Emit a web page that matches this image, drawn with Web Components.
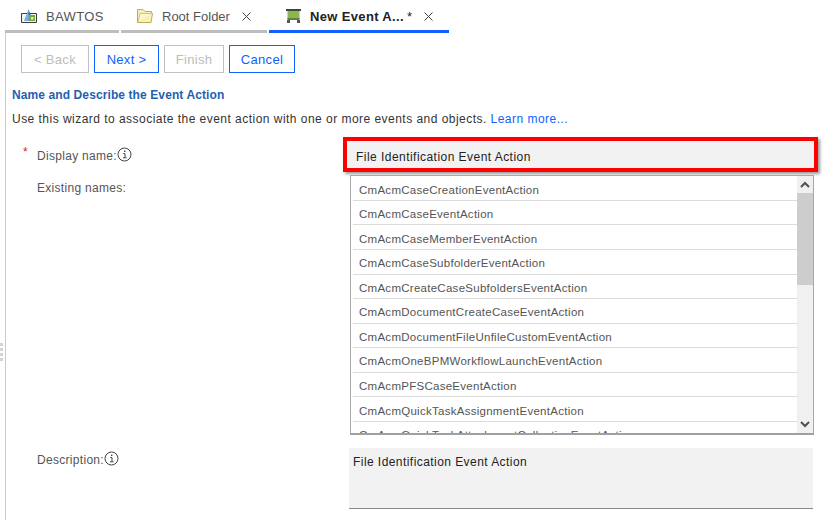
<!DOCTYPE html>
<html><head><meta charset="utf-8">
<style>
html,body{margin:0;padding:0;background:#fff}
body{width:830px;height:520px;overflow:hidden;font-family:"Liberation Sans",Arial,sans-serif;color:#333}
</style></head><body>
<wizard-app></wizard-app>
<template id="t-tab"><style>
:host{display:flex;align-items:center;box-sizing:border-box;height:33px;padding-top:2px;border-bottom:3px solid #bdbdbd;font-size:13px;letter-spacing:.35px;color:#555}
:host([active]){border-bottom-color:#0f62fe;color:#222;font-weight:bold}
.ic{display:flex;margin-right:9px}
.x{display:flex;margin-left:auto}
</style><span class="ic"><slot name="icon"></slot></span><slot></slot><span class="x"><slot name="close"></slot></span></template>
<template id="t-btn"><style>
:host{display:flex;align-items:center;justify-content:center;box-sizing:border-box;height:28px;border:1px solid #0f62fe;color:#0f62fe;font-size:13px;letter-spacing:.3px;background:#fff}
:host([disabled]){border-color:#c0c0c0;color:#bdbdbd}
</style><slot></slot></template>
<template id="t-info"><style>
:host{display:inline-flex;vertical-align:-2px}
</style><svg width="15" height="15" viewBox="0 0 15 15"><circle cx="7.5" cy="7.5" r="6.5" fill="none" stroke="#444" stroke-width="1"/><path d="M6.2 6.6H8V10.6M6 10.8H9.6" fill="none" stroke="#444" stroke-width="1"/><rect x="7" y="3.6" width="1.4" height="1.4" fill="#444"/></svg></template>
<template id="t-list"><style>
:host{display:flex;box-sizing:border-box;width:464px;height:260px;border:1px solid #a8a8a8;border-bottom:2px solid #a0a0a0;background:#fff;overflow:hidden}
.items{flex:1;padding:.4px 0 0 2px;min-width:0;overflow:hidden}
.bar{width:16px;flex:none;background:#f0f0f0;display:flex;flex-direction:column;align-items:center;justify-content:space-between}
.btn{height:17px;display:flex;align-items:center;justify-content:center}
.thumb{width:16px;height:92px;background:#cdcdcd}
.track{flex:1;width:100%}
</style><div class="items"><slot></slot></div><div class="bar"><div class="btn"><svg width="10" height="7" viewBox="0 0 10 7"><path d="M1 6L5 2L9 6" fill="none" stroke="#505050" stroke-width="2"/></svg></div><div class="thumb"></div><div class="track"></div><div class="btn"><svg width="10" height="7" viewBox="0 0 10 7"><path d="M1 1L5 5L9 1" fill="none" stroke="#505050" stroke-width="2"/></svg></div></div></template>
<template id="t-item"><style>
:host{display:flex;align-items:center;box-sizing:border-box;height:24.55px;padding:3px 0 0 6px;border-bottom:1px solid #dcdcdc;font-size:11.5px;letter-spacing:.27px;color:#555;white-space:nowrap}
</style><slot></slot></template>
<template id="t-app"><style>
:host{display:block;width:830px;height:520px;font-family:"Liberation Sans",Arial,sans-serif}
.tabs{display:grid;grid-template-columns:114px 146px 180px;column-gap:2px;padding-left:5px}
.panel{margin-left:5px;border-left:1px solid #ccc;height:487px;position:relative}
.btns{display:grid;grid-template-columns:68px 65px 60px 66px;column-gap:5px;padding:12px 0 0 15px}
h2{margin:15px 0 0 6px;font-size:12px;line-height:14px;color:#1f5fb0;letter-spacing:.1px}
p{margin:10px 0 0 6px;font-size:12px;line-height:14px;color:#333;letter-spacing:.47px}
a{color:#0f62fe}
.form{display:grid;grid-template-columns:337px 475px;margin-top:11px}
.lab{font-size:12px;letter-spacing:.3px;color:#555;padding-left:31px;position:relative;line-height:15px}
.req{position:absolute;left:17px;top:8px;color:#e02020;font-size:12px}
.name{box-sizing:border-box;height:35px;border:4px solid #f00;box-shadow:2px 2px 3px #999;background:#f2f2f2;padding:4px 0 0 9px;display:flex;align-items:center;font-size:12px;letter-spacing:.46px;color:#222}
.gap{height:3px;grid-column:1/3}
.l1{padding-top:6px}
.l0{padding-top:10px}
.listcell{padding-left:7px}
.desc{box-sizing:border-box;width:464px;height:61px;margin-left:6px;margin-top:13px;background:#f2f2f2;border-bottom:1px solid #888;padding:7px 4px;font-size:12px;letter-spacing:.44px;color:#222}
.grip{position:absolute;left:-6px;top:310px;display:grid;gap:2px}
.grip i{display:block;width:3px;height:3px;background:#d4d4d4}
</style>
<div class="tabs">
<app-tab style="padding-left:16px"><svg slot="icon" width="16" height="14" viewBox="0 0 16 14"><path d="M.5 4.5H15.5V13.5H.5Z" fill="#f4f4f0" stroke="#3c3c3c"/><path d="M7.5 0L3 12H7.5Z" fill="#74b0e0"/><path d="M7.5 0L12 12H7.5Z" fill="#2f72ad"/><rect x="8" y="6" width="6" height="6" fill="#75a83a"/><rect x="10" y="8" width="2.5" height="2.5" fill="#e4f0c4"/></svg>BAWTOS</app-tab>
<app-tab style="padding-left:16px;padding-right:15px;letter-spacing:0"><svg slot="icon" width="16" height="14" viewBox="0 0 16 14"><path d="M.5 13.5V.5H6L8 2.5H14.5V4.5H15.5L14 13.5Z" fill="#f8efb5" stroke="#c2a85a"/><path d="M1 13L3 4.5H15" fill="#fbf6d0" stroke="#d8c480"/></svg>Root Folder<svg slot="close" width="11" height="11" viewBox="0 0 11 11"><path d="M1.5 1.5L9.5 9.5M9.5 1.5L1.5 9.5" stroke="#444" stroke-width="1"/></svg></app-tab>
<app-tab active style="padding-left:17px;padding-right:15px"><svg slot="icon" width="15" height="14" viewBox="0 0 15 14"><rect x="0" y="0" width="15" height="2" fill="#3d4a35"/><rect x="1.5" y="2" width="12" height="8" fill="#8db650"/><rect x="1.5" y="9" width="12" height="2" fill="#5f7f3c"/><rect x="1" y="11" width="3" height="3" fill="#555"/><rect x="11" y="11" width="3" height="3" fill="#555"/></svg><span>New Event A...</span><span style="font-weight:normal;margin-left:3px">*</span><svg slot="close" width="11" height="11" viewBox="0 0 11 11"><path d="M1.5 1.5L9.5 9.5M9.5 1.5L1.5 9.5" stroke="#444" stroke-width="1"/></svg></app-tab>
</div>
<div class="panel">
<div class="grip"><i></i><i></i><i></i><i></i></div>
<div class="btns"><app-btn disabled>&lt; Back</app-btn><app-btn>Next &gt;</app-btn><app-btn disabled>Finish</app-btn><app-btn>Cancel</app-btn></div>
<h2>Name and Describe the Event Action</h2>
<p>Use this wizard to associate the event action with one or more events and objects. <a>Learn more...</a></p>
<div class="form">
<div class="lab l0"><span class="req">*</span>Display name:<info-icon></info-icon></div>
<div class="name">File Identification Event Action</div>
<div class="gap"></div>
<div class="lab l1">Existing names:</div>
<div class="listcell"><name-list>
<name-item>CmAcmCaseCreationEventAction</name-item>
<name-item>CmAcmCaseEventAction</name-item>
<name-item>CmAcmCaseMemberEventAction</name-item>
<name-item>CmAcmCaseSubfolderEventAction</name-item>
<name-item>CmAcmCreateCaseSubfoldersEventAction</name-item>
<name-item>CmAcmDocumentCreateCaseEventAction</name-item>
<name-item>CmAcmDocumentFileUnfileCustomEventAction</name-item>
<name-item>CmAcmOneBPMWorkflowLaunchEventAction</name-item>
<name-item>CmAcmPFSCaseEventAction</name-item>
<name-item>CmAcmQuickTaskAssignmentEventAction</name-item>
<name-item>CmAcmQuickTaskAttachmentCollectionEventAction</name-item>
</name-list></div>
<div class="lab" style="padding-top:16px">Description:<info-icon></info-icon></div>
<div><div class="desc">File Identification Event Action</div></div>
</div>
</div>
</template>
<script>
function def(name,tpl){customElements.define(name,class extends HTMLElement{constructor(){super();this.attachShadow({mode:'open'}).appendChild(document.getElementById(tpl).content.cloneNode(true));}});}
def('app-tab','t-tab');def('app-btn','t-btn');def('info-icon','t-info');def('name-list','t-list');def('name-item','t-item');def('wizard-app','t-app');
</script>
</body></html>
